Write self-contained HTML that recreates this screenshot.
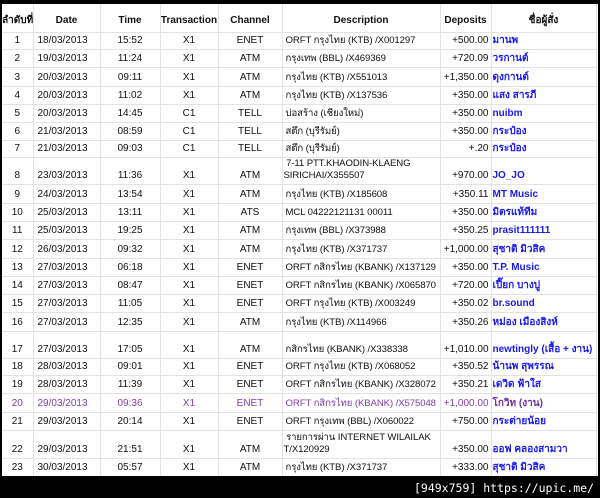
<!DOCTYPE html>
<html><head><meta charset="utf-8"><style>
body{margin:0;width:600px;height:498px;background:#000;overflow:hidden;position:relative;font-family:"Liberation Sans","Noto Sans CJK SC",sans-serif}
#w{position:absolute;left:2px;top:4px;width:596px;height:472px;background:#fff;overflow:hidden}
table{border-collapse:collapse;table-layout:fixed;width:594px;font-size:10px;color:#111}
td{border-right:1px solid #e2e2e2;border-bottom:1px solid #e2e2e2;vertical-align:bottom;padding:0 0 2px 0;white-space:nowrap;overflow:hidden;line-height:12px}
td.c{text-align:center}td.r{text-align:right;padding-right:2px}td.l{padding-left:4px}
td:nth-child(6){font-size:9.6px;letter-spacing:-0.1px}
td.l:nth-child(6){padding-left:3px}
td.n{color:#1a1aee;font-weight:bold;padding-left:1px}
tr.h td{font-weight:bold;text-align:center;padding-bottom:5px;font-size:10px;letter-spacing:0}
tr.p td{color:#8040b0}
tr.p td.n{color:#7030a0}
.bar{position:absolute;right:6px;top:481px;color:#fff;font-family:"DejaVu Sans Mono","Liberation Mono",monospace;font-size:11.5px}
</style></head><body><div id="w">
<table>
<colgroup><col style="width:31px"><col style="width:67px"><col style="width:60px"><col style="width:58px"><col style="width:64px"><col style="width:158px"><col style="width:51px"><col style="width:105px"></colgroup>
<tr class="h" style="height:28px"><td>ลำดับที่</td><td>Date</td><td>Time</td><td>Transaction</td><td>Channel</td><td>Description</td><td>Deposits</td><td>ชื่อผู้สั่ง</td></tr>
<tr style="height:17px"><td class="c">1</td><td class="l">18/03/2013</td><td class="c">15:52</td><td class="c">X1</td><td class="c">ENET</td><td class="l">ORFT กรุงไทย (KTB) /X001297</td><td class="r">+500.00</td><td class="n">มานพ</td></tr>
<tr style="height:18px"><td class="c">2</td><td class="l">19/03/2013</td><td class="c">11:24</td><td class="c">X1</td><td class="c">ATM</td><td class="l">กรุงเทพ (BBL) /X469369</td><td class="r">+720.09</td><td class="n">วรกานต์</td></tr>
<tr style="height:19px"><td class="c">3</td><td class="l">20/03/2013</td><td class="c">09:11</td><td class="c">X1</td><td class="c">ATM</td><td class="l">กรุงไทย (KTB) /X551013</td><td class="r">+1,350.00</td><td class="n">ดุงกานต์</td></tr>
<tr style="height:18px"><td class="c">4</td><td class="l">20/03/2013</td><td class="c">11:02</td><td class="c">X1</td><td class="c">ATM</td><td class="l">กรุงไทย (KTB) /X137536</td><td class="r">+350.00</td><td class="n">แสง สารภี</td></tr>
<tr style="height:18px"><td class="c">5</td><td class="l">20/03/2013</td><td class="c">14:45</td><td class="c">C1</td><td class="c">TELL</td><td class="l">บ่อสร้าง (เชียงใหม่)</td><td class="r">+350.00</td><td class="n">nuibm</td></tr>
<tr style="height:18px"><td class="c">6</td><td class="l">21/03/2013</td><td class="c">08:59</td><td class="c">C1</td><td class="c">TELL</td><td class="l">สตึก (บุรีรัมย์)</td><td class="r">+350.00</td><td class="n">กระป๋อง</td></tr>
<tr style="height:17px"><td class="c">7</td><td class="l">21/03/2013</td><td class="c">09:03</td><td class="c">C1</td><td class="c">TELL</td><td class="l">สตึก (บุรีรัมย์)</td><td class="r">+.20</td><td class="n">กระป๋อง</td></tr>
<tr style="height:25px"><td class="c">8</td><td class="l">23/03/2013</td><td class="c">11:36</td><td class="c">X1</td><td class="c">ATM</td><td style="padding-left:1px">&nbsp;7-11 PTT.KHAODIN-KLAENG<br>SIRICHAI/X355507</td><td class="r">+970.00</td><td class="n">JO_JO</td></tr>
<tr style="height:19px"><td class="c">9</td><td class="l">24/03/2013</td><td class="c">13:54</td><td class="c">X1</td><td class="c">ATM</td><td class="l">กรุงไทย (KTB) /X185608</td><td class="r">+350.11</td><td class="n">MT Music</td></tr>
<tr style="height:18px"><td class="c">10</td><td class="l">25/03/2013</td><td class="c">13:11</td><td class="c">X1</td><td class="c">ATS</td><td class="l">MCL 04222121131 00011</td><td class="r">+350.00</td><td class="n">มิตรแท้ทีม</td></tr>
<tr style="height:18px"><td class="c">11</td><td class="l">25/03/2013</td><td class="c">19:25</td><td class="c">X1</td><td class="c">ATM</td><td class="l">กรุงเทพ (BBL) /X373988</td><td class="r">+350.25</td><td class="n">prasit111111</td></tr>
<tr style="height:19px"><td class="c">12</td><td class="l">26/03/2013</td><td class="c">09:32</td><td class="c">X1</td><td class="c">ATM</td><td class="l">กรุงไทย (KTB) /X371737</td><td class="r">+1,000.00</td><td class="n">สุชาติ มิวสิค</td></tr>
<tr style="height:18px"><td class="c">13</td><td class="l">27/03/2013</td><td class="c">06:18</td><td class="c">X1</td><td class="c">ENET</td><td class="l">ORFT กสิกรไทย (KBANK) /X137129</td><td class="r">+350.00</td><td class="n">T.P. Music</td></tr>
<tr style="height:18px"><td class="c">14</td><td class="l">27/03/2013</td><td class="c">08:47</td><td class="c">X1</td><td class="c">ENET</td><td class="l">ORFT กสิกรไทย (KBANK) /X065870</td><td class="r">+720.00</td><td class="n">เปี๊ยก บางปู</td></tr>
<tr style="height:18px"><td class="c">15</td><td class="l">27/03/2013</td><td class="c">11:05</td><td class="c">X1</td><td class="c">ENET</td><td class="l">ORFT กรุงไทย (KTB) /X003249</td><td class="r">+350.02</td><td class="n">br.sound</td></tr>
<tr style="height:19px"><td class="c">16</td><td class="l">27/03/2013</td><td class="c">12:35</td><td class="c">X1</td><td class="c">ATM</td><td class="l">กรุงไทย (KTB) /X114966</td><td class="r">+350.26</td><td class="n">หม่อง เมืองสิงห์</td></tr>
<tr style="height:27px"><td class="c">17</td><td class="l">27/03/2013</td><td class="c">17:05</td><td class="c">X1</td><td class="c">ATM</td><td class="l">กสิกรไทย (KBANK) /X338338</td><td class="r">+1,010.00</td><td class="n">newtingly (เสื้อ + งาน)</td></tr>
<tr style="height:17px"><td class="c">18</td><td class="l">28/03/2013</td><td class="c">09:01</td><td class="c">X1</td><td class="c">ENET</td><td class="l">ORFT กรุงไทย (KTB) /X068052</td><td class="r">+350.52</td><td class="n">น้านพ สุพรรณ</td></tr>
<tr style="height:18px"><td class="c">19</td><td class="l">28/03/2013</td><td class="c">11:39</td><td class="c">X1</td><td class="c">ENET</td><td class="l">ORFT กสิกรไทย (KBANK) /X328072</td><td class="r">+350.21</td><td class="n">เดวิด ฟ้าใส</td></tr>
<tr class="p" style="height:19px"><td class="c">20</td><td class="l">29/03/2013</td><td class="c">09:36</td><td class="c">X1</td><td class="c">ENET</td><td class="l">ORFT กสิกรไทย (KBANK) /X575048</td><td class="r">+1,000.00</td><td class="n">โกวิท (งาน)</td></tr>
<tr style="height:18px"><td class="c">21</td><td class="l">29/03/2013</td><td class="c">20:14</td><td class="c">X1</td><td class="c">ENET</td><td class="l">ORFT กรุงเทพ (BBL) /X060022</td><td class="r">+750.00</td><td class="n">กระต่ายน้อย</td></tr>
<tr style="height:28px"><td class="c">22</td><td class="l">29/03/2013</td><td class="c">21:51</td><td class="c">X1</td><td class="c">ATM</td><td style="padding-left:1px">&nbsp;รายการผ่าน INTERNET WILAILAK<br>T/X120929</td><td class="r">+350.00</td><td class="n">ออฟ คลองสามวา</td></tr>
<tr style="height:18px"><td class="c">23</td><td class="l">30/03/2013</td><td class="c">05:57</td><td class="c">X1</td><td class="c">ATM</td><td class="l">กรุงไทย (KTB) /X371737</td><td class="r">+333.00</td><td class="n">สุชาติ มิวสิค</td></tr>
</table></div>
<div class="bar">[949x759] https://upic.me/</div>
</body></html>
